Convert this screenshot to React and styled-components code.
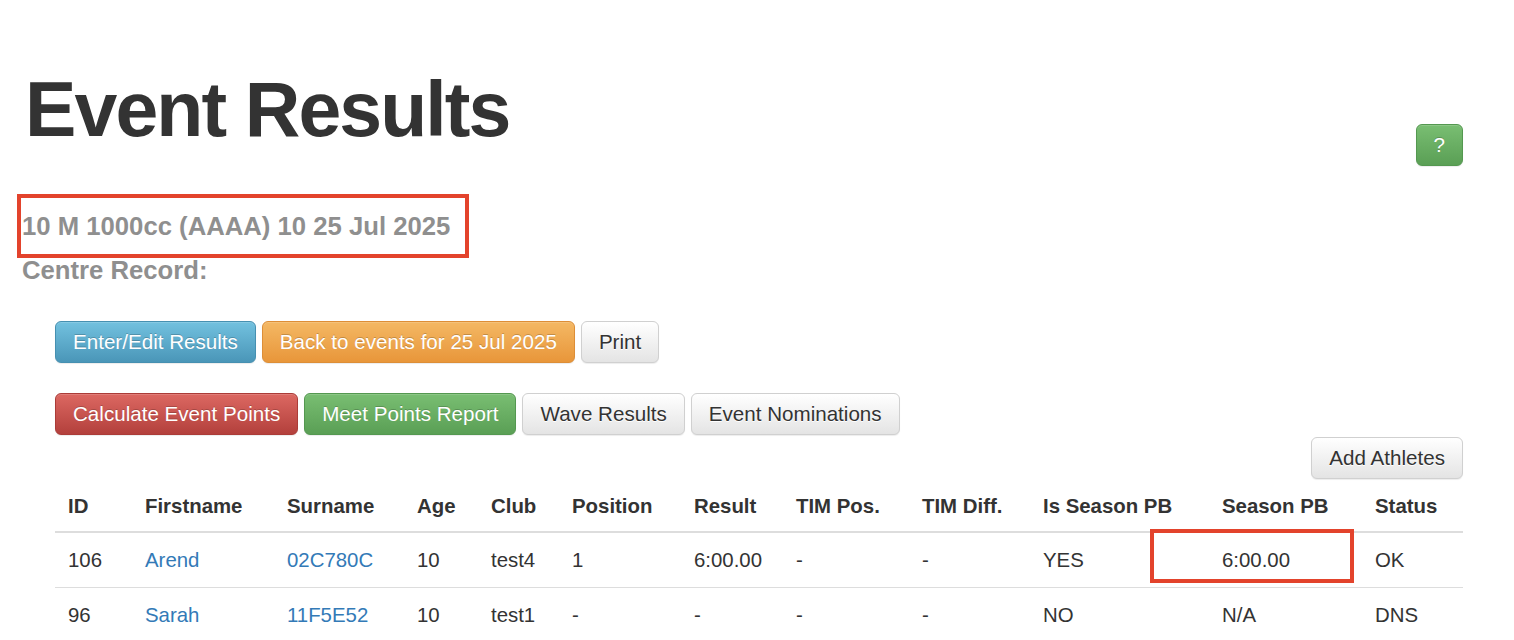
import React from 'react';
import styled, {createGlobalStyle, css} from 'styled-components';

const GlobalStyle=createGlobalStyle`
    html,body{
        margin:0;
        overflow:hidden;
        background:#fff;
    }
    body{
        font-family:"Liberation Sans",Arial,Helvetica,sans-serif;
        font-size:20px;
        line-height:1.43;
        color:#333;
    }
    *{box-sizing:border-box;}
`;

const Page=styled.div`
    padding:0 51px 0 22px;
`;

const HeaderRow=styled.div`
    display:flex;
    justify-content:space-between;
    align-items:flex-start;
    padding-top:67px;
`;

const Title=styled.h1`
    margin:0;
    padding-left:3px;
    font-size:77px;
    line-height:1.1;
    font-weight:700;
    color:#333;
    letter-spacing:-1.9px;
`;

const EventInfo=styled.div`
    margin-top:45px;
    display:flex;
    flex-direction:column;
    gap:14px;
`;

const SubHeading=styled.h4`
    position:relative;
    margin:0;
    font-size:25.7px;
    line-height:30px;
    font-weight:700;
    color:#8f8f8f;
`;

const Marker=styled.span`
    position:absolute;
    border:4px solid #e3432c;
    pointer-events:none;
    ${({$box})=>css`
        left:${$box.left}px;
        top:${$box.top}px;
        width:${$box.width}px;
        height:${$box.height}px;
    `}
`;

const Content=styled.div`
    margin-left:33px;
`;

const ButtonRow=styled.div`
    display:flex;
    gap:6px;
    justify-content:${({$right})=>$right?'flex-end':'flex-start'};
    margin-top:${({$top})=>$top}px;
`;

const variants={
    info:css`
        color:#fff;
        background-image:linear-gradient(to bottom,#72c1df 0,#4a96b8 100%);
        border-color:#4690b1;
        text-shadow:0 -1px 0 rgba(0,0,0,.2);
    `,
    warning:css`
        color:#fff;
        background-image:linear-gradient(to bottom,#f4b864 0,#e8963a 100%);
        border-color:#dd8e37;
        text-shadow:0 -1px 0 rgba(0,0,0,.2);
    `,
    danger:css`
        color:#fff;
        background-image:linear-gradient(to bottom,#dc6862 0,#b3403c 100%);
        border-color:#ab3c38;
        text-shadow:0 -1px 0 rgba(0,0,0,.2);
    `,
    success:css`
        color:#fff;
        background-image:linear-gradient(to bottom,#79be72 0,#5a9f55 100%);
        border-color:#549850;
        text-shadow:0 -1px 0 rgba(0,0,0,.2);
    `,
    default:css`
        color:#333;
        background-image:linear-gradient(to bottom,#fff 0,#e4e4e4 100%);
        border-color:#d0d0d0;
        text-shadow:0 1px 0 #fff;
    `,
};

const Button=styled.button`
    display:inline-block;
    margin:0;
    padding:9px 17px;
    font-family:inherit;
    font-size:20.6px;
    line-height:22px;
    white-space:nowrap;
    border:1px solid transparent;
    border-radius:6px;
    box-shadow:inset 0 1px 0 rgba(255,255,255,.15),0 1px 1px rgba(0,0,0,.075);
    cursor:pointer;
    ${({$variant='default'})=>variants[$variant]};
`;

const HelpButton=styled(Button)`
    margin-top:57px;
`;

const Table=styled.table`
    width:100%;
    table-layout:fixed;
    border-collapse:collapse;
    border-spacing:0;
    font-size:20.4px;
`;

const Th=styled.th`
    text-align:left;
    font-weight:700;
    padding:12px 13px 10px;
    line-height:30px;
    border-bottom:2px solid #ddd;
    white-space:nowrap;
`;

const Td=styled.td`
    position:relative;
    padding:12px 13px;
    line-height:30px;
    border-bottom:1px solid #ddd;
    white-space:nowrap;
`;

const NameLink=styled.a`
    color:#337ab7;
    text-decoration:none;
`;

const columns=[
    {label:'ID',width:77},
    {label:'Firstname',width:142},
    {label:'Surname',width:130},
    {label:'Age',width:74},
    {label:'Club',width:81},
    {label:'Position',width:122},
    {label:'Result',width:102},
    {label:'TIM Pos.',width:126},
    {label:'TIM Diff.',width:121},
    {label:'Is Season PB',width:179},
    {label:'Season PB',width:153},
    {label:'Status',width:101},
];

const results=[
    {id:106,first:'Arend',surname:'02C780C',age:10,club:'test4',pos:'1',result:'6:00.00',timPos:'-',timDiff:'-',isPb:'YES',pb:'6:00.00',status:'OK',marked:true},
    {id:96,first:'Sarah',surname:'11F5E52',age:10,club:'test1',pos:'-',result:'-',timPos:'-',timDiff:'-',isPb:'NO',pb:'N/A',status:'DNS'},
];

const ResultRow=({r})=>(
    <tr>
        <Td>{r.id}</Td>
        <Td><NameLink href="#athlete">{r.first}</NameLink></Td>
        <Td><NameLink href="#athlete">{r.surname}</NameLink></Td>
        <Td>{r.age}</Td>
        <Td>{r.club}</Td>
        <Td>{r.pos}</Td>
        <Td>{r.result}</Td>
        <Td>{r.timPos}</Td>
        <Td>{r.timDiff}</Td>
        <Td>{r.isPb}</Td>
        <Td>
            {r.pb}
            {r.marked?<Marker $box={{left:-59,top:-4,width:204,height:54}}/>:null}
        </Td>
        <Td>{r.status}</Td>
    </tr>
);

const App=()=>(
    <Page>
        <GlobalStyle/>
        <HeaderRow>
            <Title>Event Results</Title>
            <HelpButton $variant="success">?</HelpButton>
        </HeaderRow>
        <EventInfo>
            <SubHeading>
                10 M 1000cc (AAAA) 10 25 Jul 2025
                <Marker $box={{left:-5,top:-17,width:452,height:64}}/>
            </SubHeading>
            <SubHeading>Centre Record:</SubHeading>
        </EventInfo>
        <Content>
            <ButtonRow $top={36}>
                <Button $variant="info">Enter/Edit Results</Button>
                <Button $variant="warning">Back to events for 25 Jul 2025</Button>
                <Button>Print</Button>
            </ButtonRow>
            <ButtonRow $top={30}>
                <Button $variant="danger">Calculate Event Points</Button>
                <Button $variant="success">Meet Points Report</Button>
                <Button>Wave Results</Button>
                <Button>Event Nominations</Button>
            </ButtonRow>
            <ButtonRow $right $top={2}>
                <Button>Add Athletes</Button>
            </ButtonRow>
            <Table>
                <colgroup>
                    {columns.map(c=><col key={c.label} style={{width:c.width}}/>)}
                </colgroup>
                <thead>
                    <tr>{columns.map(c=><Th key={c.label}>{c.label}</Th>)}</tr>
                </thead>
                <tbody>
                    {results.map(r=><ResultRow key={r.id} r={r}/>)}
                </tbody>
            </Table>
        </Content>
    </Page>
);

export default App;
